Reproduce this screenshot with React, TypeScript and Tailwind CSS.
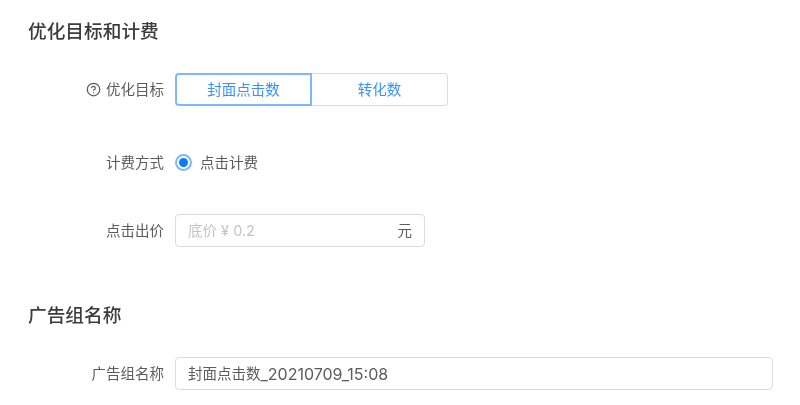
import { CircleHelp } from "lucide-react";
import type { ReactNode } from "react";

const Row = ({ label, icon, className, children }: { label: string; icon?: ReactNode; className: string; children: ReactNode }) => (
  <div className={`flex items-center h-[33px] ${className}`}>
    <div className="w-[136px] flex items-center justify-end gap-[5px] text-[14.5px] leading-[33px] text-[#5c5c5c] shrink-0">
      {icon}
      <span>{label}</span>
    </div>
    <div className="ml-[11px] flex-1 flex items-center">{children}</div>
  </div>
);

export default function App() {
  return (
    <div
      className="w-[800px] h-[405px] overflow-hidden bg-white px-[28px] pt-[20px] blur-[0.5px]"
      style={{ fontFamily: 'Inter, "Noto Sans CJK SC", sans-serif' }}
    >
      <h2 className="text-[18.7px] leading-[24px] font-medium text-[#3c3c3c]">优化目标和计费</h2>

      <Row label="优化目标" className="mt-[29px]" icon={<CircleHelp size={15} strokeWidth={2} className="text-[#5c5c5c]" />}>
        <div className="flex w-[273px] h-[33px] text-[14.5px] text-[#3a92f8]">
          <div className="w-[137px] flex items-center justify-center rounded-l-[4px] border-2 border-[#7db8fb]">封面点击数</div>
          <div className="flex-1 flex items-center justify-center rounded-r-[4px] border border-l-0 border-[#dcdcdc]">转化数</div>
        </div>
      </Row>

      <Row label="计费方式" className="mt-[40px]">
        <div className="w-[17px] h-[17px] rounded-full border-2 border-[#7db8fb] flex items-center justify-center">
          <div className="w-[9px] h-[9px] rounded-full bg-[#0a7bff]" />
        </div>
        <span className="ml-[8px] text-[14.5px] text-[#5c5c5c]">点击计费</span>
      </Row>

      <Row label="点击出价" className="mt-[35px]">
        <div className="w-[250px] h-[33px] rounded-[4px] border border-[#dcdcdc] flex items-center justify-between pl-[12px] pr-[12px] text-[14.5px]">
          <span className="text-[#c4c4c4]">底价 ¥ 0.2</span>
          <span className="text-[#5c5c5c]">元</span>
        </div>
      </Row>

      <h2 className="mt-[57px] text-[18.7px] leading-[24px] font-medium text-[#3c3c3c]">广告组名称</h2>

      <Row label="广告组名称" className="mt-[29px]">
        <div className="w-[598px] h-[33px] rounded-[4px] border border-[#dcdcdc] flex items-center pl-[12px] text-[14.5px] text-[#5c5c5c]">
          封面点击数<span className="text-[16px]">_20210709_15:08</span>
        </div>
      </Row>
    </div>
  );
}
